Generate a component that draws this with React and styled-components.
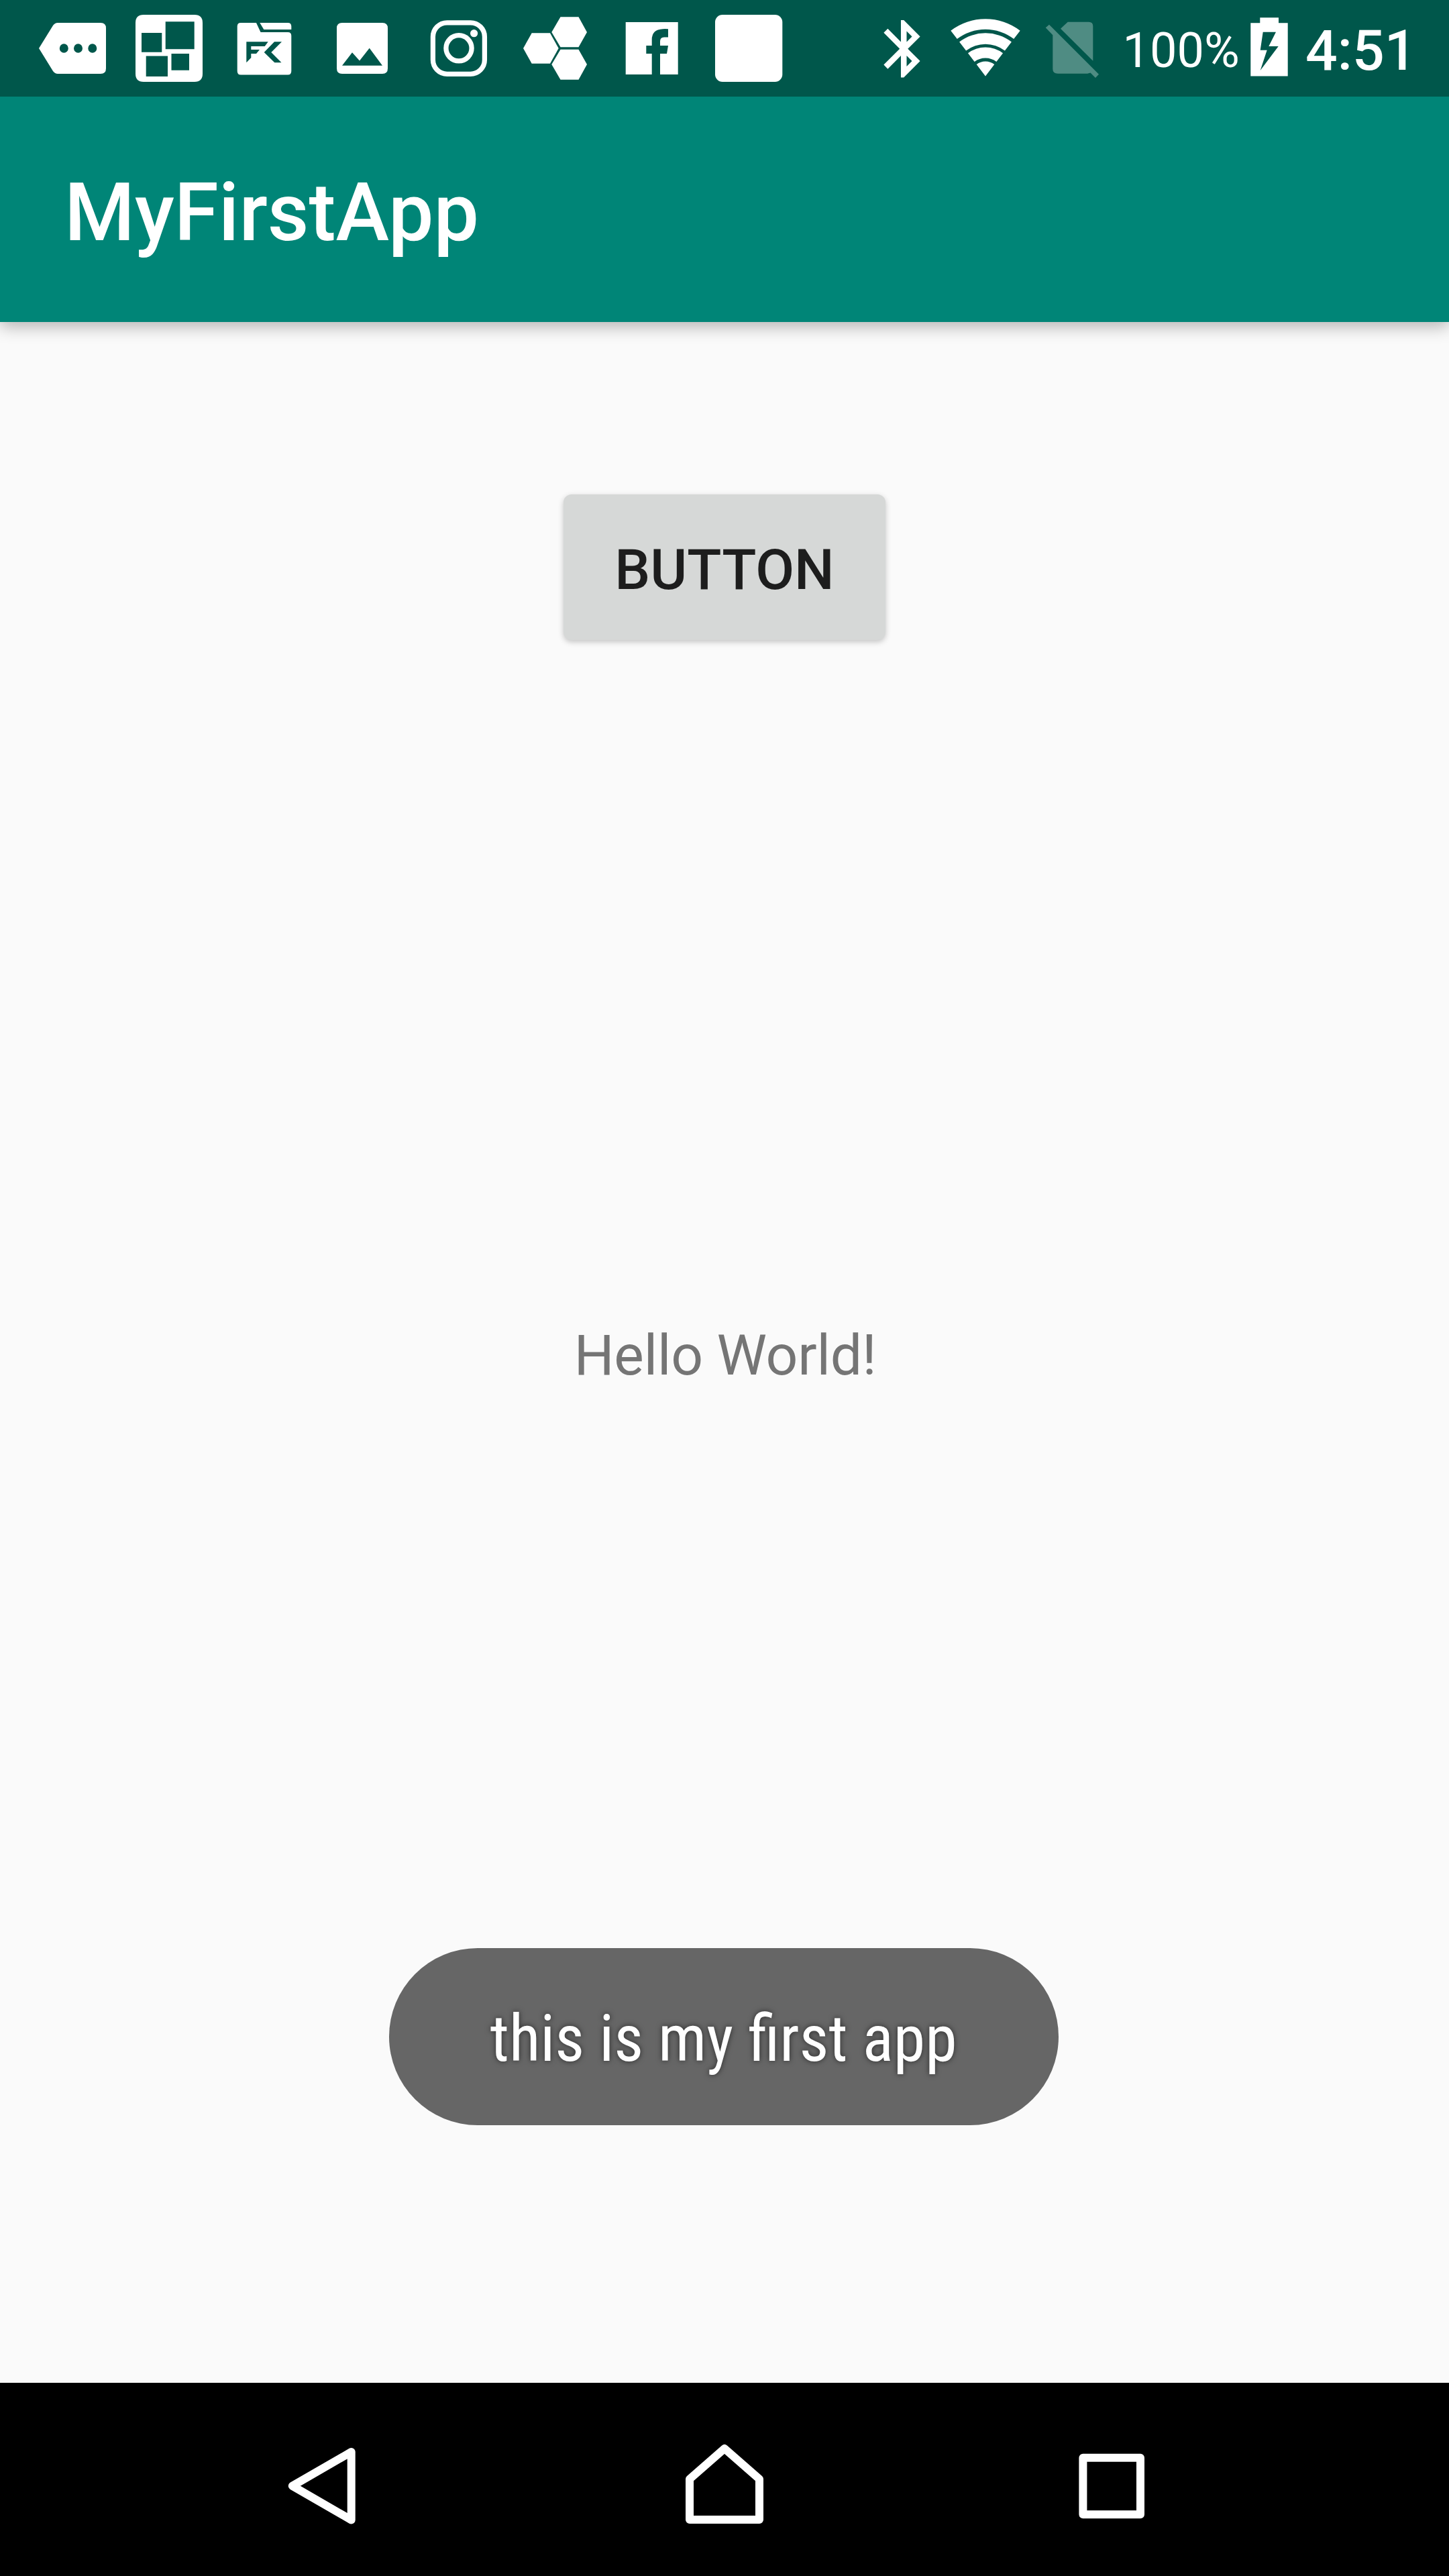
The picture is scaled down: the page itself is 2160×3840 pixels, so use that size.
import React from "react";
import styled, { createGlobalStyle } from "styled-components";

const GlobalStyle = createGlobalStyle`
  *, *::before, *::after { box-sizing: border-box; }
  body { margin: 0; background: #fafafa; }
`;

const Screen = styled.div`
  position: relative;
  display: flex;
  flex-direction: column;
  width: 2160px;
  height: 3840px;
  overflow: hidden;
  background: #fafafa;
  font-family: Roboto, "Noto Sans", sans-serif;
`;

const StatusBar = styled.header`
  position: relative;
  z-index: 2;
  display: flex;
  justify-content: space-between;
  flex: none;
  height: 144px;
  padding-left: 36px;
  background: #00574b;
  color: #fff;
`;

const IconRow = styled.div`
  display: flex;
  align-items: flex-start;
`;

const Glyph = styled.svg`
  display: block;
  flex: none;
  width: ${(p) => p.$w || 144}px;
  height: 144px;
  fill: ${(p) => p.$color || "#fff"};
`;

const StatusText = styled.span`
  flex: none;
  width: ${(p) => p.$w}px;
  padding-top: 7px;
  font-size: ${(p) => p.$size}px;
  font-weight: ${(p) => p.$weight};
  line-height: 137px;
  white-space: nowrap;
`;

const Toolbar = styled.div`
  position: relative;
  z-index: 1;
  display: flex;
  align-items: center;
  flex: none;
  height: 336px;
  padding: 9px 96px 0;
  background: #008577;
  box-shadow: 0 6px 24px rgba(0, 0, 0, 0.3);
`;

const Title = styled.h1`
  margin: 0;
  color: #fff;
  font-size: 120px;
  font-weight: 500;
  line-height: 140px;
`;

const Content = styled.main`
  display: flex;
  flex-direction: column;
  align-items: center;
  flex: 1;
  padding-top: 257px;
`;

const RaisedButton = styled.button`
  width: 480px;
  height: 217px;
  padding: 8px 0 0;
  border: 0;
  border-radius: 12px;
  background: #d6d8d7;
  box-shadow: 0 3px 9px rgba(0, 0, 0, 0.22);
  color: #1d1d1d;
  font: 500 84px/100px Roboto, "Noto Sans", sans-serif;
  text-transform: uppercase;
`;

const Greeting = styled.p`
  margin: 1017px 0 0;
  padding-left: 2px;
  color: #757575;
  font-size: 84px;
  letter-spacing: -0.2px;
  line-height: 100px;
`;

const Toast = styled.div`
  position: absolute;
  left: 580px;
  bottom: 672px;
  display: flex;
  align-items: center;
  justify-content: center;
  width: 998px;
  height: 264px;
  padding: 6px 1px 0 0;
  border-radius: 132px;
  background: #666;
`;

const ToastText = styled.span`
  color: #fff;
  font-family: "Roboto Condensed", Roboto, "Noto Sans", sans-serif;
  font-stretch: 75%;
  font-size: 96px;
  line-height: 112px;
  white-space: nowrap;
  text-shadow: 0 0 8px rgba(0, 0, 0, 0.6);
`;

const NavBar = styled.nav`
  display: flex;
  justify-content: center;
  align-items: center;
  gap: 444px;
  flex: none;
  height: 288px;
  background: #000;
`;

const NavIcon = styled.svg`
  display: block;
  width: 144px;
  height: 144px;
  fill: none;
  stroke: #fff;
  stroke-width: 12;
  stroke-linejoin: round;
`;

const MoreIcon = () => (
  <Glyph viewBox="0 0 144 144">
    <path
      fillRule="evenodd"
      d="M50 34H114q8 0 8 8V102q0 8-8 8H50q-4 0-7-4L22 72 43 38q3-4 7-4ZM52.800 72a6.500 6.800 0 1 0 13 0a6.500 6.800 0 1 0-13 0ZM74 72a6.500 6.800 0 1 0 13 0a6.500 6.800 0 1 0-13 0ZM95.300 72a6.500 6.800 0 1 0 13 0a6.500 6.800 0 1 0-13 0Z"
    />
  </Glyph>
);

const TilesIcon = () => (
  <Glyph viewBox="0 0 144 144">
    <path
      fillRule="evenodd"
      d="M34 22H110q12 0 12 12V110q0 12-12 12H34q-12 0-12-12V34q0-12 12-12ZM31 49V77.700H61.300V49ZM66.700 32.300V73.300H109.700V32.300ZM37.700 83.500V114H70V83.500ZM75.500 80V104.700H102V80Z"
    />
  </Glyph>
);

const FolderIcon = () => (
  <Glyph viewBox="0 0 144 144">
    <path d="M63.300 34H105q5.300 0 5.300 5.300V44H69.300Z" />
    <path
      fillRule="evenodd"
      d="M35 34H58L64.500 48H105q5.300 0 5.300 5.300V106q0 5.500-5.300 5.500H35q-5.300 0-5.300-5.500V39.300Q29.700 34 35 34ZM43.300 62.300V93.300L50.300 86V80H58L63 74H50.300V69H70.700L75.700 62.300ZM85 62.300L69.700 78 85.300 93.300H95.500L80.300 78 96 62.300Z"
    />
  </Glyph>
);

const PhotoIcon = () => (
  <Glyph viewBox="0 0 144 144">
    <path
      fillRule="evenodd"
      d="M42 34H102q8 0 8 8V102q0 8-8 8H42q-8 0-8-8V42q0-8 8-8ZM42 97.800H102L82.700 71.700 68 90.500 57 78.300Z"
    />
  </Glyph>
);

const CameraIcon = () => (
  <Glyph viewBox="0 0 144 144">
    <g fill="none" stroke="#fff" strokeWidth="7.300">
      <rect x="33.400" y="33.800" width="77" height="76.500" rx="21" />
      <circle cx="72" cy="71.800" r="19.100" />
    </g>
    <circle cx="94.600" cy="49.700" r="5.600" />
  </Glyph>
);

const HexagonsIcon = () => (
  <Glyph viewBox="0 0 144 144">
    <path d="M24 72L36.700 49.300H64L76.700 72 64 94.700H36.700Z" />
    <path d="M66.300 48L79.500 25.300H106.500L119 48 106.500 70.300H79.500Z" />
    <path d="M66.300 96L79.500 73.700H106.500L119 96 106.500 118.700H79.500Z" />
  </Glyph>
);

const SocialIcon = () => (
  <Glyph viewBox="0 0 144 144">
    <path
      fillRule="evenodd"
      d="M32.700 33H110.700V111H84V80H94L96 68H84V61.500Q84 55.500 90 55.500H96V43.300Q92 43 88 43.200Q71.700 44 71.700 59V68H63.300V80H71.700V111H32.700Z"
    />
  </Glyph>
);

const BlankIcon = () => (
  <Glyph viewBox="0 0 144 144">
    <rect x="22" y="22" width="100.300" height="100" rx="11" />
  </Glyph>
);

const BluetoothIcon = () => (
  <Glyph $w={110.6} viewBox="0 0 110.6 144">
    <path
      transform="translate(0 21.500) scale(4.270)"
      d="M17.710 7.710L12 2h-1v7.590L6.410 5 5 6.410 10.590 12 5 17.590 6.410 19 11 14.410V22h1l5.710-5.710-4.300-4.290 4.300-4.290zM13 5.830l1.880 1.880L13 9.590V5.830zm1.880 10.460L13 18.170v-3.760l1.880 1.880z"
    />
  </Glyph>
);

// Annular sector opening upwards from the wifi fan's apex.
const APEX = { x: 62, y: 113.5 };
const fanBand = (outer, inner) => {
  const at = (r, side) => `${APEX.x + side * r * 0.606} ${APEX.y - r * 0.795}`;
  return `M${at(outer, -1)}A${outer} ${outer} 0 0 1 ${at(outer, 1)}L${at(inner, 1)}A${inner} ${inner} 0 0 0 ${at(inner, -1)}Z`;
};
const FAN_BANDS = [
  [85.3, 69.7],
  [64.2, 47.7],
  [43, 27],
  [22, 0.1],
];

const WifiIcon = () => (
  <Glyph $w={125} viewBox="0 0 125 144">
    {FAN_BANDS.map(([outer, inner]) => (
      <path key={outer} d={fanBand(outer, inner)} />
    ))}
  </Glyph>
);

const NoSimIcon = () => (
  <Glyph $w={141.5} $color="#4f8c83" viewBox="0 0 141.5 144">
    <path d="M49 42.700L59.700 32.700H91q6.300 0 6.300 6.300V90.700Z" />
    <path d="M26.700 41.300L32 36.700 106 110.700 101 116 93.500 108.500 89 109.700H45q-7.700 0-7.700-7V52.300Z" />
  </Glyph>
);

const BatteryIcon = () => (
  <Glyph $w={96} viewBox="0 0 96 144">
    <path
      fillRule="evenodd"
      d="M14.300 34.300H28.300V26.200H56V34.300H69.700V113.500H14.300ZM32.700 47.700L28.700 74.700H38.700L28.700 105 55.700 69H41.300L52 47.700Z"
    />
  </Glyph>
);

export default function App() {
  return (
    <>
      <GlobalStyle />
      <Screen>
        <StatusBar>
          <IconRow>
            <MoreIcon />
            <TilesIcon />
            <FolderIcon />
            <PhotoIcon />
            <CameraIcon />
            <HexagonsIcon />
            <SocialIcon />
            <BlankIcon />
          </IconRow>
          <IconRow>
            <BluetoothIcon />
            <WifiIcon />
            <NoSimIcon />
            <StatusText $w={176.5} $size={72} $weight={400}>
              100%
            </StatusText>
            <BatteryIcon />
            <StatusText $w={214} $size={84} $weight={500}>
              4:51
            </StatusText>
          </IconRow>
        </StatusBar>
        <Toolbar>
          <Title>MyFirstApp</Title>
        </Toolbar>
        <Content>
          <RaisedButton>Button</RaisedButton>
          <Greeting>Hello World!</Greeting>
        </Content>
        <NavBar>
          <NavIcon viewBox="0 0 144 144">
            <path d="M103.700 31V132.500L15.800 81.800Z" />
          </NavIcon>
          <NavIcon viewBox="0 0 144 144">
            <path d="M20 71.500L72 26 124 71.500V132H20Z" />
          </NavIcon>
          <NavIcon viewBox="0 0 144 144">
            <path d="M18.400 39.800H104V124.200H18.400Z" />
          </NavIcon>
        </NavBar>
        <Toast>
          <ToastText>this is my first app</ToastText>
        </Toast>
      </Screen>
    </>
  );
}
